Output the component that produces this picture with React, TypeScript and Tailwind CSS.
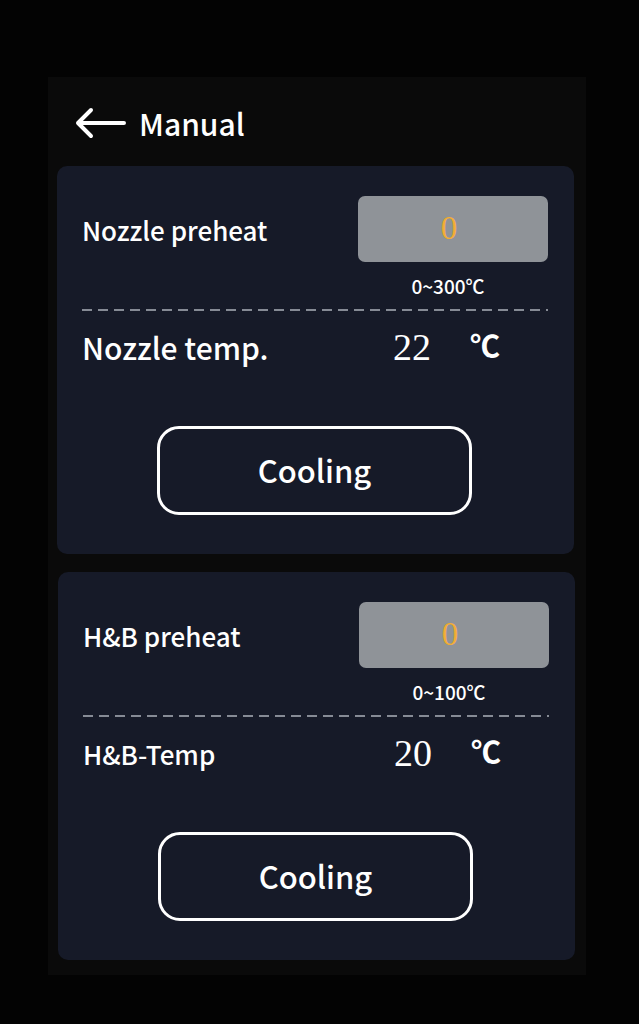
import React from "react";

const sans = "font-['Noto_Sans_CJK_SC','Noto_Sans',sans-serif]";
const serif = "font-['Liberation_Serif','DejaVu_Serif',serif]";

const BackArrow = () => (
  <svg width="52" height="32" viewBox="0 0 52 32" fill="none">
    <path
      d="M3 16 H49 M16 3 L3 16 L16 29"
      stroke="#ffffff"
      strokeWidth="4"
      strokeLinecap="round"
      strokeLinejoin="round"
    />
  </svg>
);

interface HeaterCardProps {
  preheatLabel: string;
  range: string;
  tempLabel: string;
  tempLabelClass: string;
  temp: number;
}

const HeaterCard: React.FC<HeaterCardProps> = ({
  preheatLabel,
  range,
  tempLabel,
  tempLabelClass,
  temp,
}) => {
  return (
    <div className="w-[517px] h-[388px] rounded-[10px] bg-[#161a28] pl-[25px] pr-[26px] pt-[30px] flex flex-col">
      <div className="flex items-start">
        <div className="flex-1 h-[66px] flex items-center text-[26px] font-medium text-white">
          {preheatLabel}
        </div>
        <div className="flex flex-col items-center w-[190px]">
          <div className="w-[190px] h-[66px] rounded-[7px] bg-[#8f9398] flex items-center justify-center">
            <span className={`${serif} text-[33px] text-[#f2ad34] leading-none pr-[8px] pb-[2px]`}>0</span>
          </div>
          <div className="mt-[14px] pr-[10px] text-[19px] font-medium text-white leading-none">{range}</div>
        </div>
      </div>
      <div className="mt-[14px] h-[2px] bg-[repeating-linear-gradient(90deg,#868b95_0_10px,transparent_10px_16px)]" />
      <div className="mt-[16px] h-[40px] flex items-center">
        <div className={`w-[311px] font-medium text-white ${tempLabelClass}`}>{tempLabel}</div>
        <div className={`${serif} text-[38px] text-white leading-none w-[77px]`}>{temp}</div>
        <div className="text-[30px] font-semibold text-white leading-none -mt-[6px]">℃</div>
      </div>
      <div className="flex-1 flex items-start justify-center pt-[59px] pr-[1px]">
        <button className="w-[315px] h-[89px] rounded-[22px] border-[3px] border-white flex items-center justify-center text-[31px] font-medium text-white">
          Cooling
        </button>
      </div>
    </div>
  );
};

export default function App() {
  return (
    <div className={`${sans} w-[639px] h-[1024px] bg-[#030303] pt-[77px] pl-[48px] overflow-hidden`}>
      <div className="w-[538px] h-[898px] bg-[#0a0a0a] pl-[9px] flex flex-col">
        <div className="h-[89px] flex items-center pl-[18px] pt-[2px] gap-[12px]">
          <BackArrow />
          <span className="text-[30px] font-medium text-white leading-none">Manual</span>
        </div>
        <HeaterCard
          preheatLabel="Nozzle preheat"
          range="0~300℃"
          tempLabel="Nozzle temp."
          tempLabelClass="text-[30px]"
          temp={22}
        />
        <div className="h-[18px]" />
        <div className="pl-[1px]">
          <HeaterCard
            preheatLabel="H&B preheat"
            range="0~100℃"
            tempLabel="H&B-Temp"
            tempLabelClass="text-[26px]"
            temp={20}
          />
        </div>
      </div>
    </div>
  );
}
